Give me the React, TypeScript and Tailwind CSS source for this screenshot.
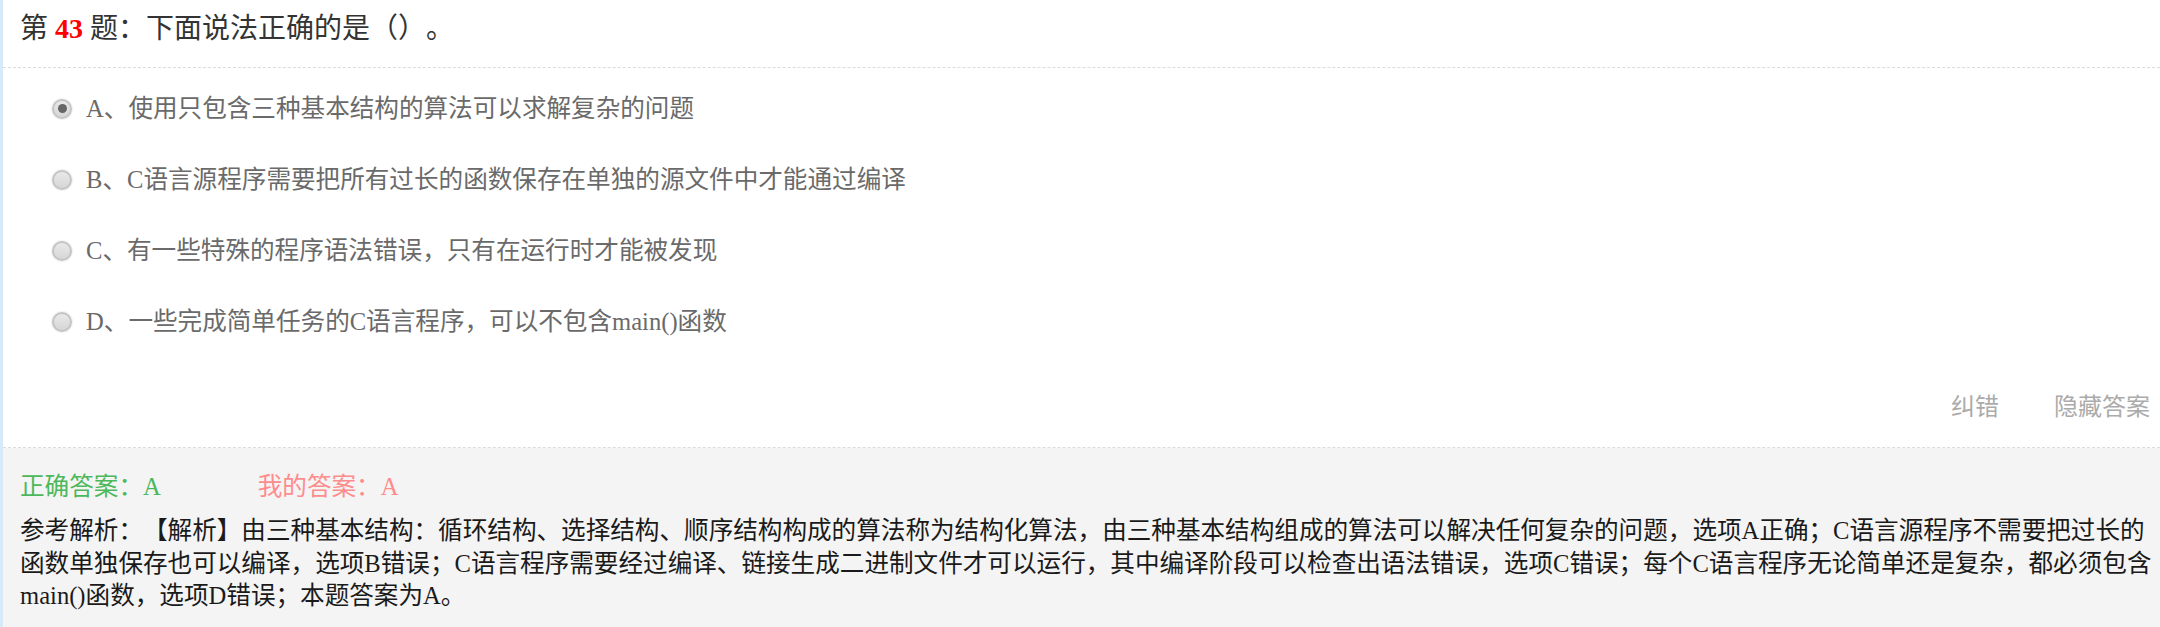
import React from "react";

const options = [
  { key: "A", text: "使用只包含三种基本结构的算法可以求解复杂的问题", checked: true },
  { key: "B", text: "C语言源程序需要把所有过长的函数保存在单独的源文件中才能通过编译", checked: false },
  { key: "C", text: "有一些特殊的程序语法错误，只有在运行时才能被发现", checked: false },
  { key: "D", text: "一些完成简单任务的C语言程序，可以不包含main()函数", checked: false },
];

function Radio({ checked }: { checked: boolean }) {
  return (
    <span className="flex h-[20px] w-[20px] shrink-0 items-center justify-center rounded-full border-2 border-[#c4c4c4] bg-gradient-to-b from-[#e9e9e9] to-[#d6d6d6] shadow-[0_0_1px_1px_rgba(0,0,0,0.06)]">
      {checked && <span className="h-[9px] w-[9px] rounded-full bg-[#666]" />}
    </span>
  );
}

export default function App() {
  return (
    <div className="flex min-h-[627px] flex-col border-l-[3px] border-[#d6eaf8] bg-white font-['Liberation_Serif','Noto_Sans_CJK_SC',serif] [text-spacing-trim:space-all]">
      <div className="border-b border-dashed border-[#dcdcdc] pl-[17px] pt-[8px] pb-[18px] text-[28px] leading-[41px] text-[#333]">
        <span>第 </span>
        <span className="font-bold text-[#ff0000]">43</span>
        <span> 题：下面说法正确的是（）。</span>
      </div>

      <div className="flex flex-col pt-[5px] pl-[49px]">
        {options.map((o) => (
          <div key={o.key} className="flex h-[71px] items-center gap-[14px]">
            <Radio checked={o.checked} />
            <span className="text-[24.6px] leading-[34px] text-[#6a6a6a]">
              {o.key}、{o.text}
            </span>
          </div>
        ))}
      </div>

      <div className="flex justify-end gap-[55px] border-b border-dashed border-[#dcdcdc] pt-[31px] pb-[25px] pr-[10px] font-['Noto_Sans_CJK_SC',sans-serif] text-[24px] leading-[34px] text-[#ababab]">
        <span>纠错</span>
        <span>隐藏答案</span>
      </div>

      <div className="flex flex-1 flex-col bg-[#f4f4f4] pl-[17px] pr-[8px] pt-[22px] pb-[14px]">
        <div className="flex gap-[97px] text-[24.6px] leading-[33px]">
          <span className="text-[#4cb85c]">正确答案：A</span>
          <span className="text-[#ff8c8c]">我的答案：A</span>
        </div>
        <p className="mt-[12px] text-[24.6px] leading-[32.5px] text-[#1a1a1a]">
          参考解析：【解析】由三种基本结构：循环结构、选择结构、顺序结构构成的算法称为结构化算法，由三种基本结构组成的算法可以解决任何复杂的问题，选项A正确；C语言源程序不需要把过长的函数单独保存也可以编译，选项B错误；C语言程序需要经过编译、链接生成二进制文件才可以运行，其中编译阶段可以检查出语法错误，选项C错误；每个C语言程序无论简单还是复杂，都必须包含main()函数，选项D错误；本题答案为A。
        </p>
      </div>
    </div>
  );
}
